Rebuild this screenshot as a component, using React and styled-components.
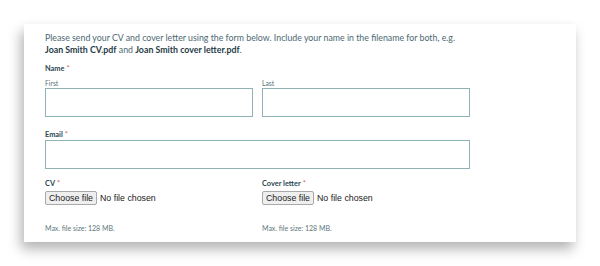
import React from "react";
import styled, { createGlobalStyle } from "styled-components";

const Global = createGlobalStyle`
  html, body { margin: 0; padding: 0; background: #ffffff; }
  body { font-family: Lato, "Noto Sans", sans-serif; }
  * { box-sizing: border-box; }
`;

const Page = styled.div`
  width: 600px;
  height: 266px;
  padding: 24px 24px 0 24px;
  background: #ffffff;
`;

const Card = styled.div`
  width: 552px;
  height: 218px;
  background: #ffffff;
  box-shadow: -3px 7px 12px rgba(0, 0, 0, 0.3);
  padding: 8px 0 0 21px;
`;

const Intro = styled.p`
  margin: 0;
  width: 500px;
  font-size: 8.8px;
  line-height: 12px;
  color: #4c6871;
`;

const Strong = styled.strong`
  font-weight: 700;
  color: #1f3b47;
`;

const Form = styled.div`
  width: 425px;
  display: flex;
  flex-direction: column;
`;

const Label = styled.div`
  font-size: 7.4px;
  font-weight: 700;
  color: #2a4751;
  line-height: 9px;
  margin-top: ${(p) => p.$mt || 0}px;
`;

const Req = styled.span`
  color: #d65a5a;
  font-weight: 400;
  margin-left: 2px;
`;

const SubLabel = styled.div`
  font-size: 6.8px;
  color: #58737b;
  line-height: 8px;
  margin-top: ${(p) => p.$mt || 0}px;
`;

const Row = styled.div`
  display: grid;
  grid-template-columns: 208px 208px;
  column-gap: 9px;
  margin-top: ${(p) => p.$mt || 0}px;
`;

const Field = styled.div`
  display: flex;
  flex-direction: column;
`;

const Input = styled.div`
  height: 29px;
  border: 1px solid #8fb2b7;
  background: #ffffff;
  margin-top: ${(p) => p.$mt || 0}px;
`;

const FileRow = styled.div`
  display: flex;
  align-items: center;
  margin-top: 3px;
  height: 14px;
`;

const FileButton = styled.span`
  display: inline-flex;
  align-items: center;
  height: 14px;
  padding: 0 3px;
  background: #efefef;
  border: 1px solid #a9a9a9;
  border-radius: 2px;
  font-family: "Liberation Sans", Arial, sans-serif;
  font-size: 8.8px;
  color: #222;
`;

const FileText = styled.span`
  margin-left: 3px;
  font-family: "Liberation Sans", Arial, sans-serif;
  font-size: 8.8px;
  color: #222;
`;

const Hint = styled.div`
  font-size: 7px;
  color: #5e777e;
  line-height: 8px;
  margin-top: 19px;
`;

function FileField({ label }) {
  return (
    <Field>
      <Label>
        {label}
        <Req>*</Req>
      </Label>
      <FileRow>
        <FileButton>Choose file</FileButton>
        <FileText>No file chosen</FileText>
      </FileRow>
      <Hint>Max. file size: 128 MB.</Hint>
    </Field>
  );
}

export default function App() {
  return (
    <>
      <Global />
      <Page>
        <Card>
          <Intro>
            Please send your CV and cover letter using the form below. Include your name in the filename for both, e.g.
            <br />
            <Strong>Joan Smith CV.pdf</Strong> and <Strong>Joan Smith cover letter.pdf</Strong>.
          </Intro>
          <Form>
            <Label $mt={8}>
              Name<Req>*</Req>
            </Label>
            <Row>
              <Field>
                <SubLabel $mt={6}>First</SubLabel>
                <Input $mt={1} />
              </Field>
              <Field>
                <SubLabel $mt={6}>Last</SubLabel>
                <Input $mt={1} />
              </Field>
            </Row>
            <Label $mt={13}>
              Email<Req>*</Req>
            </Label>
            <Input $mt={1} />
            <Row $mt={10}>
              <FileField label="CV" />
              <FileField label="Cover letter" />
            </Row>
          </Form>
        </Card>
      </Page>
    </>
  );
}
